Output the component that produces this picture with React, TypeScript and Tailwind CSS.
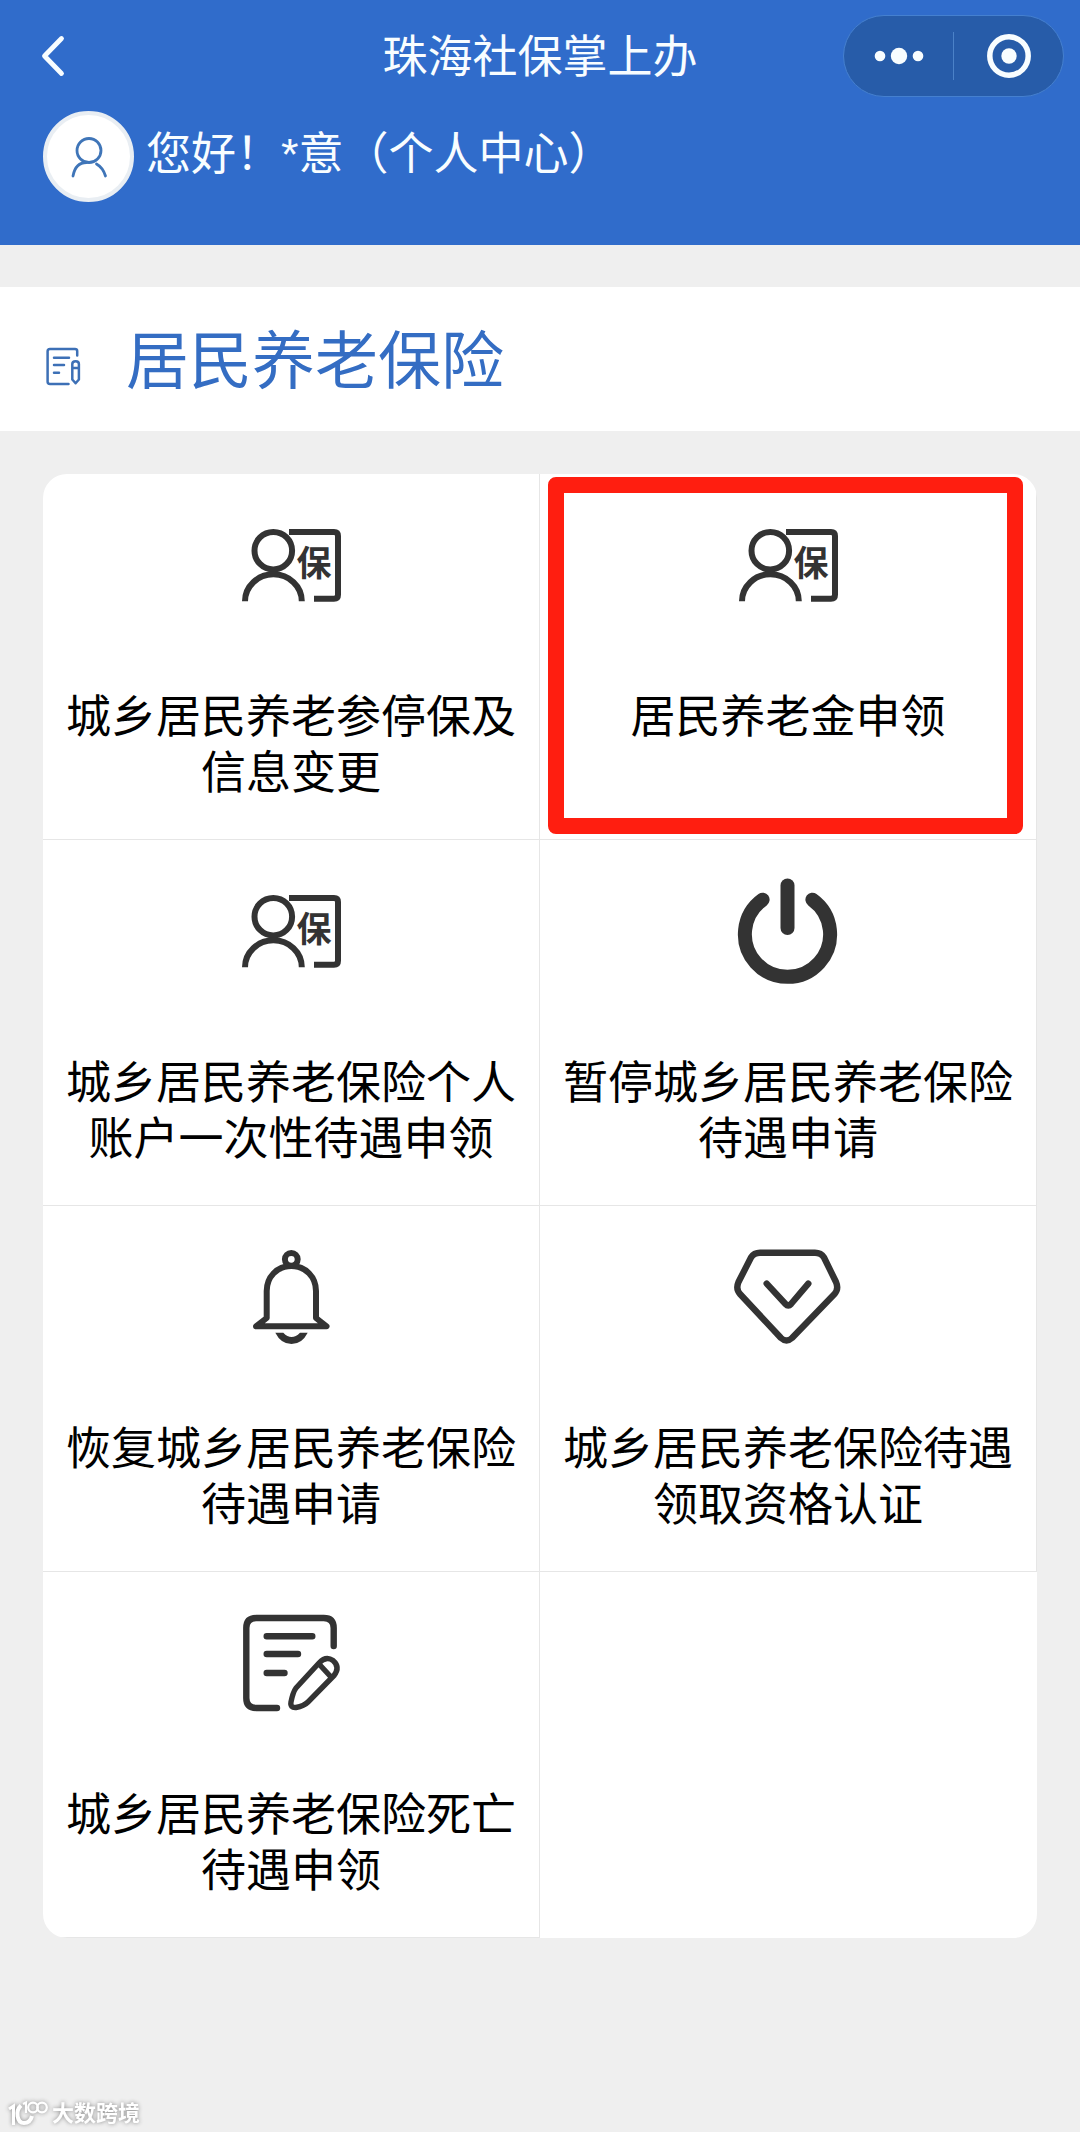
import { FC, ReactNode } from "react";
import clsx from "clsx";

type IconProps = {
  className?: string;
};

type Service = {
  title: string;
  Icon: FC<IconProps>;
  highlighted?: boolean;
};

const BackIcon: FC<IconProps> = ({ className }) => (
  <svg viewBox="0 0 26 44" fill="none" className={className}>
    <path
      d="M21.5 4.5L4.5 22L21.5 39.5"
      stroke="currentColor"
      strokeWidth="4.8"
      strokeLinecap="round"
      strokeLinejoin="round"
    />
  </svg>
);

const MoreIcon: FC<IconProps> = ({ className }) => (
  <svg viewBox="0 0 50 18" fill="currentColor" className={className}>
    <circle cx="6" cy="9" r="5.3" />
    <circle cx="25" cy="9" r="8.2" />
    <circle cx="44" cy="9" r="5.3" />
  </svg>
);

const TargetIcon: FC<IconProps> = ({ className }) => (
  <svg viewBox="0 0 44 44" fill="none" className={className}>
    <circle cx="22" cy="22" r="19.2" stroke="currentColor" strokeWidth="5.5" />
    <circle cx="22" cy="22" r="7.7" fill="currentColor" />
  </svg>
);

const AvatarIcon: FC<IconProps> = ({ className }) => (
  <svg
    viewBox="0 0 40 44"
    fill="none"
    stroke="currentColor"
    strokeWidth="2.8"
    strokeLinecap="round"
    className={className}
  >
    <circle cx="20" cy="15.5" r="12" />
    <path d="M4 41C5.5 33 10 27.5 17.5 27.5M27.5 29C32 31.5 35 36 36.5 41" />
  </svg>
);

const SectionIcon: FC<IconProps> = ({ className }) => (
  <svg
    viewBox="0 0 36 40"
    fill="none"
    stroke="currentColor"
    strokeWidth="2.5"
    strokeLinecap="round"
    strokeLinejoin="round"
    className={className}
  >
    <path d="M32.2 8.5V4Q32.2 1.9 30 1.9H5Q2.6 1.9 2.6 4.2V34.8Q2.6 37 5 37H23.5" />
    <path d="M9 10.7H24M9 18H19M9 25.7H14" />
    <path d="M27.3 17Q27.3 14.2 30.6 14.2T33.9 17V32.5L30.6 36.3L27.3 32.5ZM27.3 21H33.9" />
  </svg>
);

const InsuranceCardIcon: FC<IconProps> = ({ className }) => (
  <svg
    viewBox="0 0 110 110"
    fill="none"
    stroke="currentColor"
    strokeWidth="6"
    className={className}
  >
    <circle cx="37.3" cy="39.7" r="18.8" />
    <path d="M9 90.3A28.4 27 0 0 1 65.8 90.3" />
    <path d="M53 21H98Q102 21 102 25V83.7Q102 87.7 98 87.7H78" />
    <text
      x="78"
      y="65"
      textAnchor="middle"
      fontSize="35"
      fontWeight="700"
      fill="currentColor"
      stroke="none"
    >
      保
    </text>
  </svg>
);

const PowerIcon: FC<IconProps> = ({ className }) => (
  <svg
    viewBox="0 0 110 110"
    fill="none"
    stroke="currentColor"
    strokeWidth="14"
    strokeLinecap="round"
    className={className}
  >
    <path d="M29.6 22.7A42.6 42.6 0 1 0 79.4 22.7" />
    <path d="M54.5 8.5V51" />
  </svg>
);

const BellIcon: FC<IconProps> = ({ className }) => (
  <svg
    viewBox="0 0 110 110"
    fill="none"
    stroke="currentColor"
    strokeWidth="6"
    strokeLinejoin="round"
    className={className}
  >
    <circle cx="55.3" cy="16.3" r="6.4" />
    <path d="M30.7 75V48C30.7 34 41 23 55.3 23S80 34 80 48V75L90.5 83.3H20Z" />
    <path
      d="M39.3 89.7H47.3Q55.5 98.5 64 89.7H71.7Q66 101 55.5 101T39.3 89.7Z"
      fill="currentColor"
      stroke="none"
    />
  </svg>
);

const DiamondIcon: FC<IconProps> = ({ className }) => (
  <svg
    viewBox="0 0 110 110"
    fill="none"
    stroke="currentColor"
    strokeWidth="6.4"
    strokeLinecap="round"
    strokeLinejoin="round"
    className={className}
  >
    <path d="M27 9.7H82Q88 9.7 91 14.5L103 39Q106 46 101.500 51L59 95Q53.500 100 48 95L7 51Q2.500 46 5.500 39L18 14.5Q21 9.7 27 9.7Z" />
    <path d="M33.7 40.7L52.5 61Q55.3 64 58 61L75.3 40.7" />
  </svg>
);

const FormIcon: FC<IconProps> = ({ className }) => (
  <svg
    viewBox="0 0 110 110"
    fill="none"
    stroke="currentColor"
    strokeWidth="6.4"
    strokeLinecap="round"
    strokeLinejoin="round"
    className={className}
  >
    <path d="M97.7 37V19Q97.7 9 87.7 9H20.3Q10.3 9 10.3 19V89Q10.3 99 20.3 99H41" />
    <path d="M30.7 27.3H76.3M30.7 45H62M30.7 64H48.5" />
    <path
      d="M83 54L60 79Q57 83 55 93Q54 99 60 98.5Q68 97 72 93L98 66.5Q104.5 58 97 51.5Q90 46.5 83 54ZM83 55L95 68"
      strokeWidth="5.4"
    />
  </svg>
);

const BrandMark: FC<IconProps> = ({ className }) => (
  <svg
    viewBox="0 0 40 28"
    fill="none"
    stroke="currentColor"
    strokeWidth="3"
    className={className}
  >
    <path d="M1 9L5.5 6V25" />
    <path d="M13 5.5C7 11 9 23 16 23C21 23 23 20 24 16" strokeWidth="4" />
    <path d="M15 4L18 2.5V13" strokeWidth="2.2" />
    <circle cx="25" cy="7.5" r="4.8" strokeWidth="2.2" />
    <circle cx="34" cy="7.5" r="4.8" strokeWidth="2.2" />
  </svg>
);

const services: Service[] = [
  { title: "城乡居民养老参停保及信息变更", Icon: InsuranceCardIcon },
  { title: "居民养老金申领", Icon: InsuranceCardIcon, highlighted: true },
  { title: "城乡居民养老保险个人账户一次性待遇申领", Icon: InsuranceCardIcon },
  { title: "暂停城乡居民养老保险待遇申请", Icon: PowerIcon },
  { title: "恢复城乡居民养老保险待遇申请", Icon: BellIcon },
  { title: "城乡居民养老保险待遇领取资格认证", Icon: DiamondIcon },
  { title: "城乡居民养老保险死亡待遇申领", Icon: FormIcon },
];

const CapsuleButton: FC<{ label: string; children: ReactNode }> = ({
  label,
  children,
}) => (
  <button
    type="button"
    aria-label={label}
    className="flex flex-1 items-center justify-center"
  >
    {children}
  </button>
);

const Header: FC = () => (
  <header className="bg-[#306ccb] pb-[43px] text-[#f8fdff]">
    <div className="grid grid-cols-3 items-center px-4 pt-[15px]">
      <button type="button" aria-label="返回" className="ml-6 w-fit">
        <BackIcon className="h-11 w-[26px]" />
      </button>
      <h1 className="pt-1 text-center text-[45px] leading-[56px] whitespace-nowrap">
        珠海社保掌上办
      </h1>
      <div className="flex h-[82px] w-[221px] items-center justify-self-end rounded-full border border-[#4580cf] bg-[#275ca9]">
        <CapsuleButton label="更多">
          <MoreIcon className="h-[18px] w-[50px]" />
        </CapsuleButton>
        <span className="h-12 w-px bg-[#4b82c8]" />
        <CapsuleButton label="关闭">
          <TargetIcon className="size-11" />
        </CapsuleButton>
      </div>
    </div>
    <a href="#profile" className="mt-[14px] ml-[43px] flex w-fit gap-3">
      <span className="flex size-[91px] items-center justify-center rounded-full border-4 border-[#e9eef3] bg-white text-[#3f75b8]">
        <AvatarIcon className="h-11 w-10" />
      </span>
      <span className="mt-4 text-[45px] leading-[56px]">
        您好！*意（个人中心）
      </span>
    </a>
  </header>
);

const ServiceItem: FC<Service> = ({ title, Icon, highlighted }) => (
  <a
    href="#service"
    className={clsx(
      "flex flex-col items-center border-r border-b border-[#e6e6e6] px-4 pt-[37px] pb-[37px]",
      highlighted && "relative"
    )}
  >
    <Icon className="size-[110px] text-[#333333]" />
    <span className="mt-[69px] text-center text-[45px] leading-[56px] text-black">
      {title}
    </span>
    {highlighted && (
      <span className="absolute top-[3px] right-[13px] bottom-[5px] left-2 rounded-lg border-16 border-[#ff1e10]" />
    )}
  </a>
);

const App: FC = () => {
  return (
    <div
      lang="zh-CN"
      className="flex min-h-screen flex-col bg-[#efefef] font-['Liberation_Sans','Noto_Sans_CJK_SC',sans-serif]"
    >
      <Header />

      <section className="mt-[42px] flex items-center bg-white pt-[34px] pb-[30px] pl-[45px]">
        <SectionIcon className="mt-3 h-10 w-9 text-[#3d70b6]" />
        <h2 className="ml-[45px] text-[63px] leading-[80px] text-[#346dc3]">
          居民养老保险
        </h2>
      </section>

      <main className="mx-[43px] mt-[43px] grid grid-cols-2 overflow-hidden rounded-3xl bg-white">
        {services.map((service) => (
          <ServiceItem key={service.title} {...service} />
        ))}
      </main>

      <footer className="mt-auto flex items-center gap-1 pb-[2px] pl-2 text-white drop-shadow-[0_0_2px_#888888]">
        <BrandMark className="h-7 w-10" />
        <span className="text-[22px] leading-8 font-bold">大数跨境</span>
      </footer>
    </div>
  );
};

export default App;
